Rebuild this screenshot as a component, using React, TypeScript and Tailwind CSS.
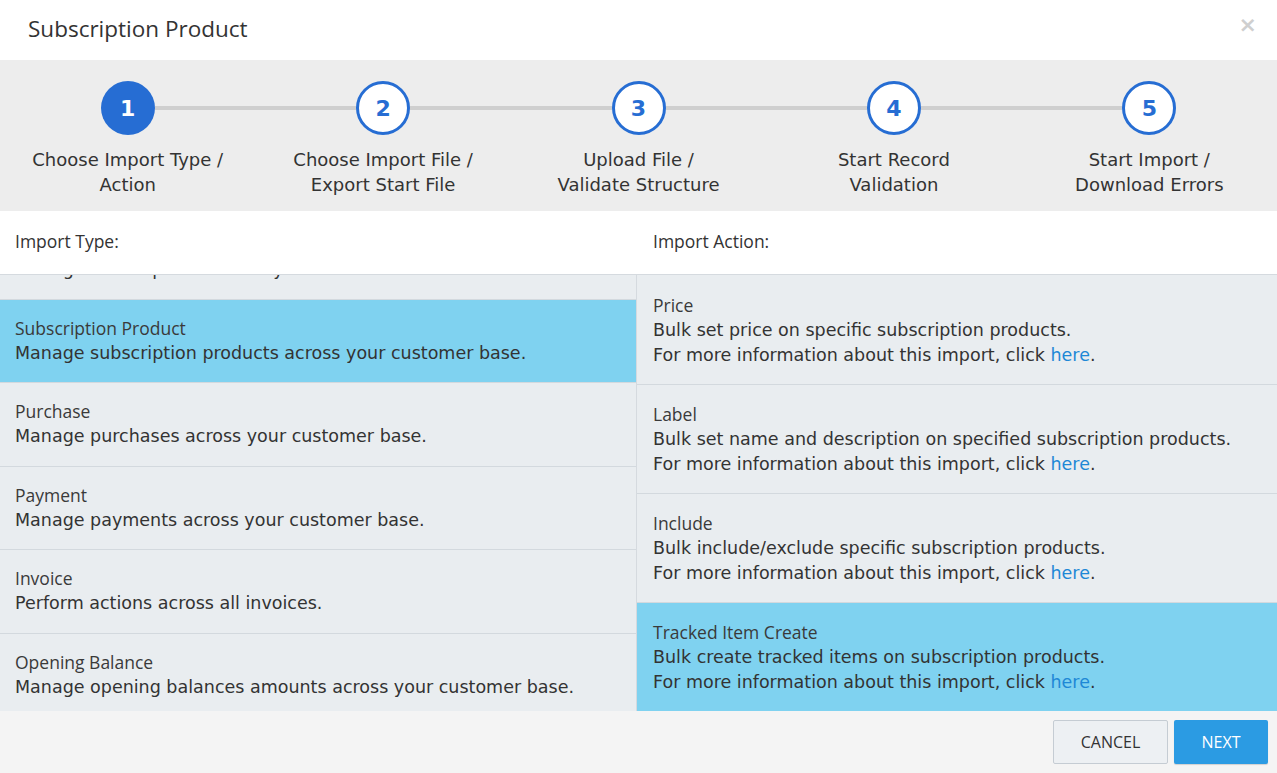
const steps = [
  ["Choose Import Type /", "Action"],
  ["Choose Import File /", "Export Start File"],
  ["Upload File /", "Validate Structure"],
  ["Start Record", "Validation"],
  ["Start Import /", "Download Errors"],
];

const importTypes = [
  { title: "Subscription", desc: "Manage subscriptions across your customer base." },
  { title: "Subscription Product", desc: "Manage subscription products across your customer base.", active: true },
  { title: "Purchase", desc: "Manage purchases across your customer base." },
  { title: "Payment", desc: "Manage payments across your customer base." },
  { title: "Invoice", desc: "Perform actions across all invoices." },
  { title: "Opening Balance", desc: "Manage opening balances amounts across your customer base." },
];

const importActions = [
  { title: "Price", desc: "Bulk set price on specific subscription products." },
  { title: "Label", desc: "Bulk set name and description on specified subscription products." },
  { title: "Include", desc: "Bulk include/exclude specific subscription products." },
  { title: "Tracked Item Create", desc: "Bulk create tracked items on subscription products.", active: true },
];

function Step({ n, label }: { n: number; label: string[] }) {
  const done = n === 1;
  return (
    <div className="flex flex-col items-center">
      <div className="flex items-center w-full">
        <div className={n === 1 ? "flex-1 h-1 bg-transparent" : "flex-1 h-1 bg-[#cfcfcf]"} />
        <div
          className={
            done
              ? "w-[54px] h-[54px] rounded-full flex items-center justify-center text-[22px] font-bold font-['DejaVu_Sans'] bg-[#266dd3] text-white"
              : "w-[54px] h-[54px] rounded-full flex items-center justify-center text-[22px] font-bold font-['DejaVu_Sans'] bg-white border-[3px] border-[#266dd3] text-[#266dd3]"
          }
        >
          {n}
        </div>
        <div className={n === 5 ? "flex-1 h-1 bg-transparent" : "flex-1 h-1 bg-[#cfcfcf]"} />
      </div>
      <div className="mt-3 text-center text-[18px] leading-[25px] text-[#333] font-['DejaVu_Sans']">
        <div>{label[0]}</div>
        <div>{label[1]}</div>
      </div>
    </div>
  );
}

export default function App() {
  return (
    <div className="w-[1277px] h-[773px] bg-white flex flex-col overflow-hidden">
      <div className="h-[60px] flex items-center justify-between pl-[28px] pr-[20px]">
        <div className="text-[22.5px] text-[#333] -mt-[2px] font-['Open_Sans']">Subscription Product</div>
        <div className="text-[22px] font-bold text-[#cfcfcf] -mt-[12px] font-['DejaVu_Sans']">×</div>
      </div>

      <div className="h-[151px] bg-[#ededed] grid grid-cols-5 pt-[21px]">
        {steps.map((s, i) => (
          <Step key={i} n={i + 1} label={s} />
        ))}
      </div>

      <div className="h-[64px] grid grid-cols-[637px_1fr] border-b border-[#d5dadf]">
        <div className="pl-[15px] flex items-center text-[17.5px] text-[#333] -mt-[3px] font-['Open_Sans']">Import Type:</div>
        <div className="pl-[16px] flex items-center text-[17.5px] text-[#333] -mt-[3px] font-['Open_Sans']">Import Action:</div>
      </div>

      <div className="h-[436px] grid grid-cols-[637px_1fr]">
        <div className="overflow-hidden bg-[#e9edf0] border-r border-[#d5dadf]">
          <div className="-mt-[59px]">
            {importTypes.map((t) => (
              <div
                key={t.title}
                className={
                  t.active
                    ? "pl-[15px] pt-[16px] pb-[16.5px] border-b border-[#d3d9de] bg-[#7fd2f0]"
                    : "pl-[15px] pt-[16px] pb-[16.5px] border-b border-[#d3d9de]"
                }
              >
                <div className="text-[17.5px] leading-[25px] text-[#3a3a3a] font-['Open_Sans']">{t.title}</div>
                <div className="text-[17.5px] leading-[25px] text-[#333] font-['DejaVu_Sans']">{t.desc}</div>
              </div>
            ))}
          </div>
        </div>
        <div className="overflow-hidden bg-[#e9edf0] pt-px">
          {importActions.map((a) => (
            <div
              key={a.title}
              className={
                a.active
                  ? "pl-[16px] pt-[17px] pb-[16px] border-b border-[#d3d9de] bg-[#7fd2f0]"
                  : "pl-[16px] pt-[17px] pb-[16px] border-b border-[#d3d9de]"
              }
            >
              <div className="text-[17.5px] leading-[25px] text-[#3a3a3a] font-['Open_Sans']">{a.title}</div>
              <div className="text-[17.5px] leading-[25px] text-[#333] font-['DejaVu_Sans']">{a.desc}</div>
              <div className="text-[17.5px] leading-[25px] text-[#333] font-['DejaVu_Sans']">
                For more information about this import, click <span className="text-[#1e88d6]">here</span>.
              </div>
            </div>
          ))}
        </div>
      </div>

      <div className="flex-1 bg-[#f4f4f4] flex items-center justify-end gap-[6px] pr-[9px]">
        <button className="w-[115px] h-[44px] bg-[#edf0f3] border border-[#c5ccd3] rounded-[2px] text-[16px] text-[#333] font-['Open_Sans']">
          CANCEL
        </button>
        <button className="w-[94px] h-[44px] bg-[#2b9be3] rounded-[2px] text-[16px] text-white shadow-[0_1px_1px_rgba(0,0,0,0.15)] font-['Open_Sans']">
          NEXT
        </button>
      </div>
    </div>
  );
}
